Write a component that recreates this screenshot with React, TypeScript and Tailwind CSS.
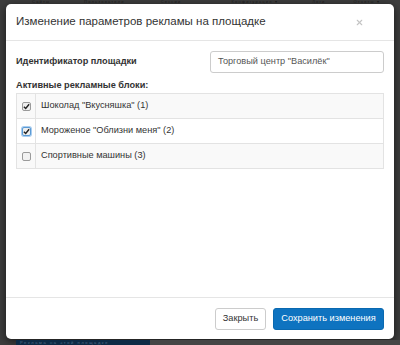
import {X} from 'lucide-react'

type TAdBlock = {
  id: number
  name: string
  checked: boolean
  focused?: boolean
}

const adBlocks: TAdBlock[] = [
  {id: 1, name: 'Шоколад "Вкусняшка" (1)', checked: true},
  {id: 2, name: 'Мороженое "Облизни меня" (2)', checked: true, focused: true},
  {id: 3, name: 'Спортивные машины (3)', checked: false},
]

const navItems = [
  {label: 'Сайты', x: 'ml-[32px]'},
  {label: 'Пользователи', x: 'ml-[34px]'},
  {label: 'Сессии', x: 'ml-[36px]'},
  {label: 'Конфигурация ▾', x: 'ml-[50px]'},
  {label: 'Логи', x: 'ml-[34px]'},
  {label: 'Отчеты ▾', x: 'ml-[28px]'},
]

function CheckBox({checked, focused}: {checked: boolean; focused?: boolean}) {
  return (
    <div
      className={`w-[9px] h-[9px] rounded-[2px] border flex items-center justify-center ${
        focused ? 'border-[#5b9bd5] shadow-[0_0_0_1px_#a9cdf0]' : 'border-[#9a9a9a]'
      } ${checked ? 'bg-[#eeeeee]' : 'bg-[#f2f2f2]'}`}
    >
      {checked && (
        <svg width="7" height="7" viewBox="0 0 8 8">
          <path d="M1 4.2 L3.1 6.3 L7 1.5" fill="none" stroke="#222" strokeWidth="1.6" />
        </svg>
      )}
    </div>
  )
}

function App() {
  return (
    <div
      className="w-[400px] h-[345px] bg-[#3d3d3d] overflow-hidden flex flex-col text-[#333]"
      style={{fontFamily: '"Liberation Sans", Arial, sans-serif'}}
    >
      {/* navbar behind the overlay */}
      <div className="h-[4px] flex items-center text-[4px] text-[#1e1e1e] leading-[4px] tracking-[1.2px] shrink-0">
        {navItems.map(item => (
          <span key={item.label} className={`${item.x} whitespace-nowrap`}>
            {item.label}
          </span>
        ))}
      </div>

      <div className="mx-[6px] h-[335px] shrink-0 bg-white rounded-[5px] shadow-[0_2px_8px_rgba(0,0,0,0.6)] flex flex-col">
        <div className="h-[37px] px-[10px] border-b border-[#e5e5e5] flex items-center justify-between">
          <h4 className="text-[11.5px] leading-none">Изменение параметров рекламы на площадке</h4>
          <X size={9} strokeWidth={3} className="text-[#c4c4c4] mr-[20px] mt-[1px]" />
        </div>

        <div className="flex-1 px-[10px] pt-[10px]">
          <div className="flex items-center justify-between h-[22px]">
            <span className="text-[9.2px] font-bold">Идентификатор площадки</span>
            <div className="w-[174px] h-[22px] border border-[#cccccc] rounded-[3px] flex items-center px-[7px] text-[9.2px] text-[#555]">
              Торговый центр "Василёк"
            </div>
          </div>
          <div className="text-[9.2px] font-bold mt-[6px] leading-[12px]">Активные рекламные блоки:</div>
          <table className="w-full border-collapse mt-[2px] text-[9.2px]">
            <tbody>
              {adBlocks.map((block, index) => (
                <tr key={block.id} className={index % 2 === 0 ? 'bg-[#f9f9f9]' : 'bg-white'}>
                  <td className="w-[19px] h-[25px] border border-[#e3e3e3] align-middle">
                    <div className="flex justify-center">
                      <CheckBox checked={block.checked} focused={block.focused} />
                    </div>
                  </td>
                  <td className="h-[25px] border border-[#e3e3e3] pl-[5px] align-middle">{block.name}</td>
                </tr>
              ))}
            </tbody>
          </table>
        </div>

        <div className="h-[42px] border-t border-[#e5e5e5] px-[10px] pt-[10px] flex justify-end gap-[7px]">
          <button className="w-[51px] h-[22px] border border-[#cccccc] rounded-[3px] bg-white text-[9.2px] text-[#333]">
            Закрыть
          </button>
          <button className="w-[111px] h-[22px] border border-[#0a69b0] rounded-[3px] bg-[#0e73c0] text-[9.2px] text-white">
            Сохранить изменения
          </button>
        </div>
      </div>

      {/* page content behind the overlay */}
      <div className="flex-1 flex items-end">
        <div className="ml-[16px] w-[134px] h-[5px] bg-[#0d2a45] flex items-center text-[4px] leading-[4px] tracking-[1.6px] text-[#4f6b88] pl-[4px] whitespace-nowrap">
          Реклама на этой площадке
        </div>
        <div className="flex-1 h-[5px] bg-[#454545]" />
      </div>
    </div>
  )
}

export default App
